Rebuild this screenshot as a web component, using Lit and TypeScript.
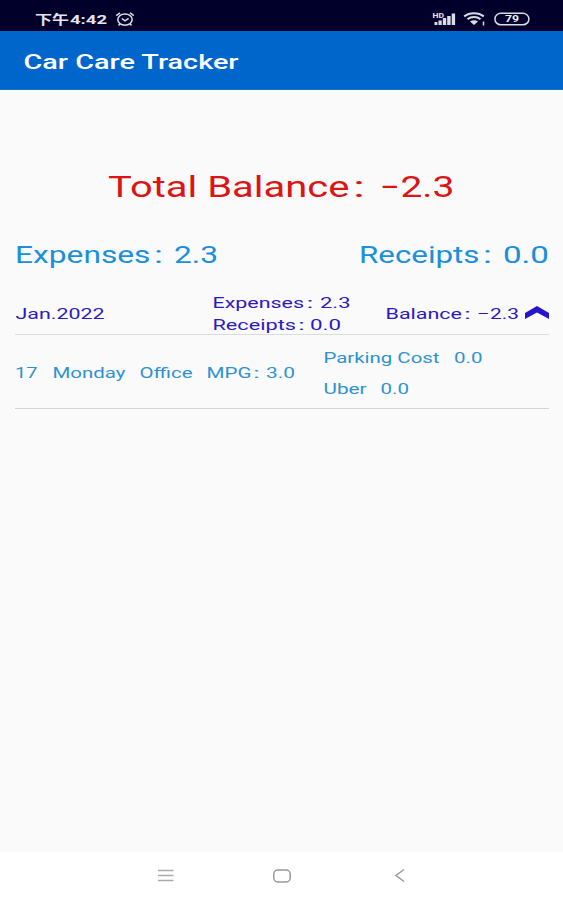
import { LitElement, html, svg, css } from "lit";
import { customElement, property } from "lit/decorators.js";

type Part = [text: string, x: number, width: number];

/** One line of wide-set text; each part is fitted to its own width. */
@customElement("wide-text")
class WideText extends LitElement {
  @property({ attribute: false }) parts: Part[] = [];
  @property({ type: Number }) size = 16;

  static styles = css`
    :host { display: block; flex: none; }
    svg { display: block; overflow: visible; }
    text { font-family: Roboto, "Noto Sans CJK SC", sans-serif; fill: currentColor; white-space: pre; }
  `;

  render() {
    const last = this.parts[this.parts.length - 1];
    const width = last ? last[1] + last[2] : 0;
    return html`<svg width=${width} height=${this.size + 6}>
      ${this.parts.map(([t, x, w]) => svg`<text x=${x} y=${this.size} font-size=${this.size}
        textLength=${w} lengthAdjust="spacingAndGlyphs">${t}</text>`)}
    </svg>`;
  }
}

@customElement("app-root")
class AppRoot extends LitElement {
  static styles = css`
    :host {
      display: flex; flex-direction: column; width: 563px; height: 900px;
      box-sizing: border-box; overflow: hidden; background: #fafafa;
      font-family: Roboto, "Noto Sans CJK SC", sans-serif;
    }
    svg { display: block; flex: none; overflow: visible; }
    .status { height: 31px; box-sizing: border-box; flex: none; background: #00002b; color: #e4e4ee; display: flex; align-items: flex-start; padding: 11px 33px 0 35px; }
    .clock { font-weight: 700; }
    .alarm { margin-left: 8px; }
    .signal { margin-left: auto; }
    .wifi { margin-left: 7px; }
    .battery { margin-left: 8px; }
    .pct { font: 700 9px Roboto, sans-serif; fill: #f0f0f5; }
    .hd { font: 700 7px Roboto, sans-serif; fill: #e4e4ee; }
    .bar { height: 59px; flex: none; box-sizing: border-box; padding: 17px 24px 0; background: #0066cc; color: #fff; font-weight: 500; border-bottom: 1px solid #1a70cc; }
    .content { flex: 1; padding: 0 14px 0 15px; }
    .total { display: flex; justify-content: center; padding: 78px 2px 0 0; height: 71px; color: #dc1414; }
    .sums { display: flex; justify-content: space-between; height: 52px; color: #1a8fdc; }
    .month { display: flex; height: 43px; border-bottom: 1px solid #dcdcdc; color: #2c18c4; }
    .name { padding-top: 12px; width: 198px; }
    .pair { width: 173px; padding-top: 1px; box-sizing: border-box; }
    .pair wide-text { height: 21.700px; }
    .balance { padding-top: 12px; }
    .chevron { margin: 15px 0 0 6px; }
    .day { display: flex; height: 73px; border-bottom: 1px solid #d4d4d4; color: #2f92d2; }
    .entry { padding-top: 27px; width: 309px; }
    .costs { padding-top: 11.700px; }
    .costs wide-text { height: 31px; }
    .nav { height: 48px; flex: none; background: #fff; display: flex; align-items: center; padding-left: 158px; }
    .nav svg { margin-top: -1px; }
    .nav .home { margin-left: 99px; }
    .nav .back { margin-left: 104px; }
  `;

  private line(size: number, parts: Part[], cls = "") {
    return html`<wide-text class=${cls} .size=${size} .parts=${parts}></wide-text>`;
  }

  render() {
    return html`
      <div class="status">
        ${this.line(13, [["下午", 0, 34], ["4:42", 35, 37]], "clock")}
        <svg class="alarm" width="20" height="16" viewBox="0 0 20 16" fill="none" stroke="#dcdce6" stroke-width="1.500">
          <ellipse cx="10" cy="8.600" rx="7.200" ry="5.600" /><path d="M1.200 4.600 5 1.800M18.800 4.600 15 1.800M6.800 7.500l3.200 2.300 3.600-2.500M5 13l-1.500 1.400M15 13l1.500 1.400" />
        </svg>
        <svg class="signal" width="24" height="16" viewBox="0 0 24 16" fill="#dcdce6">
          <text class="hd" x="0.500" y="6.500" textLength="11.500" lengthAdjust="spacingAndGlyphs">HD</text>
          <path d="M2.500 11h2.900v3H2.500zM6.500 9.500h3.200V14H6.500zM10.800 7h3.400v7h-3.400zM15.200 5h3.400v9h-3.400zM19.700 2.500h3.400V14h-3.400z" />
        </svg>
        <svg class="wifi" width="23" height="16" viewBox="0 0 23 16" fill="none" stroke="#dcdce6" stroke-width="2">
          <path d="M1.200 5.400C6.500 1.200 15.500 1.200 20.800 5.400M4.500 8.200c3.600-2.800 9.400-2.800 13 0" />
          <path d="M7 10.500C9.500 8.800 12.500 8.800 15 10.500L11 14z" fill="#dcdce6" stroke="none" /><path d="M20.500 10.500v4" stroke-width="1.500" />
        </svg>
        <svg class="battery" width="36" height="16" viewBox="0 0 36 16">
          <rect x="0.900" y="2.300" width="34" height="11.500" rx="6" fill="none" stroke="#dcdce6" stroke-width="1.500" />
          <text class="pct" x="11" y="11.300" textLength="14" lengthAdjust="spacingAndGlyphs">79</text>
        </svg>
      </div>
      <div class="bar">${this.line(21, [["Car Care Tracker", -0.5, 215]])}</div>
      <div class="content">
        <div class="total">${this.line(29, [["Total Balance", 0, 241.5], [":", 245, 12], ["−", 272, 20], ["2.3", 292.5, 54]])}</div>
        <div class="sums">
          ${this.line(23.5, [["Expenses", 0, 135.5], [":", 139, 9], ["2.3", 159, 44]])}
          ${this.line(23.5, [["Receipts", 0, 120.5], [":", 124, 9], ["0.0", 144, 46]])}
        </div>
        <div class="month">
          <div class="name">${this.line(15.5, [["Jan.2022", 0.5, 89]])}</div>
          <div class="pair">
            ${this.line(15.5, [["Expenses", -0.5, 91.5], [":", 93.5, 7], ["2.3", 107, 30.5]])}
            ${this.line(15.5, [["Receipts", -0.5, 83.5], [":", 85, 7], ["0.0", 97, 31]])}
          </div>
          <div class="balance">${this.line(15.5, [["Balance", -0.5, 76.5], [":", 78, 7], ["−", 91, 13], ["2.3", 104, 29]])}</div>
          <svg class="chevron" width="24" height="13" viewBox="0 0 24 13"><path d="M12 0 24 7v6L12 6.500 0 13V7z" fill="#2414d0" /></svg>
        </div>
        <div class="day">
          <div class="entry">${this.line(15.5, [["17", 0, 22.5], ["Monday", 37.5, 73], ["Office", 124.5, 53], ["MPG", 191.5, 45], [":", 238, 7], ["3.0", 251, 29]])}</div>
          <div class="costs">
            ${this.line(15.5, [["Parking Cost", -0.5, 116], ["0.0", 130, 28.5]])}
            ${this.line(15.5, [["Uber", -0.5, 43], ["0.0", 56.5, 28.5]])}
          </div>
        </div>
      </div>
      <div class="nav">
        <svg width="16" height="13" viewBox="0 0 16 13" stroke="#aaa" stroke-width="1.500"><path d="M0 1.500h15.500M0 6.500h15.500M0 11.500h15.500" /></svg>
        <svg class="home" width="18" height="14" viewBox="0 0 18 14"><rect x="0.800" y="1" width="16.400" height="12" rx="4" fill="none" stroke="#999" stroke-width="1.500" /></svg>
        <svg class="back" width="10" height="13" viewBox="0 0 10 13"><path d="M9 .5 1 6.500l8 6" fill="none" stroke="#999" stroke-width="1.500" /></svg>
      </div>
    `;
  }
}
